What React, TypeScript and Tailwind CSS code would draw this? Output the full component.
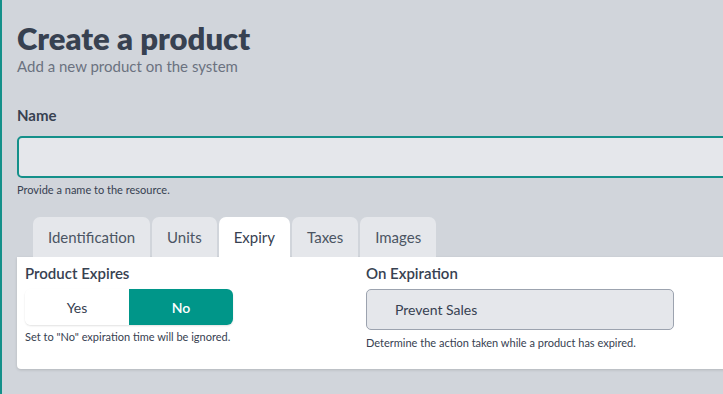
const tabs = ["Identification", "Units", "Expiry", "Taxes", "Images"];

export default function App() {
  return (
    <div
      className="min-h-[394px] w-full overflow-hidden border-l-2 border-[#14908a] bg-[#d1d5db] pl-[15px] text-[#374151]"
      style={{ fontFamily: "Lato, 'Noto Sans', sans-serif" }}
    >
      <div className="w-[760px] pt-[20px]">
        <h1 className="text-[31px] font-extrabold leading-[36px] text-[#374151]">Create a product</h1>
        <p className="mt-[1px] text-[15px] leading-[18px] text-[#6b7280]">Add a new product on the system</p>

        <label className="mt-[31px] block text-[15px] font-bold leading-[18px] text-[#374151]">Name</label>
        <div className="mt-[12px] h-[42px] w-full rounded-[5px] border-2 border-[#14908a] bg-[#e5e7eb]" />
        <p className="mt-[5px] text-[11px] leading-[14px] text-[#374151]">Provide a name to the resource.</p>

        <div className="mt-[20px] flex gap-[2px] pl-[16px]">
          {tabs.map((t) => (
            <div
              key={t}
              className={
                t === "Expiry"
                  ? "flex h-[40px] items-center rounded-t-[7px] bg-white px-[15px] text-[15px] text-[#374151]"
                  : "flex h-[40px] items-center rounded-t-[7px] bg-[#e5e7eb] px-[15px] text-[15px] text-[#4b5563]"
              }
            >
              {t}
            </div>
          ))}
        </div>

        <div className="flex h-[112px] rounded-b-[4px] bg-white px-[8px] pt-[6px] shadow-[0_1px_3px_rgba(0,0,0,0.15)]">
          <div className="w-[341px]">
            <div className="text-[15px] font-semibold leading-[20px] text-[#374151]">Product Expires</div>
            <div className="mt-[6px] flex h-[36px] w-[208px] overflow-hidden rounded-[6px] shadow-[0_1px_2px_rgba(0,0,0,0.12)]">
              <div className="flex flex-1 items-center justify-center bg-white text-[14px] text-[#374151]">Yes</div>
              <div className="flex flex-1 items-center justify-center bg-[#009689] text-[14px] font-semibold text-white">No</div>
            </div>
            <p className="mt-[5px] text-[11px] leading-[14px] text-[#374151]">Set to "No" expiration time will be ignored.</p>
          </div>
          <div>
            <div className="text-[15px] font-semibold leading-[20px] text-[#374151]">On Expiration</div>
            <div className="mt-[6px] flex h-[41px] w-[308px] items-center rounded-[5px] border border-[#9ca3af] bg-[#e5e7eb] pl-[28px] text-[14px] text-[#374151]">
              Prevent Sales
            </div>
            <p className="mt-[6px] text-[11px] leading-[14px] text-[#374151]">Determine the action taken while a product has expired.</p>
          </div>
        </div>
      </div>
    </div>
  );
}
